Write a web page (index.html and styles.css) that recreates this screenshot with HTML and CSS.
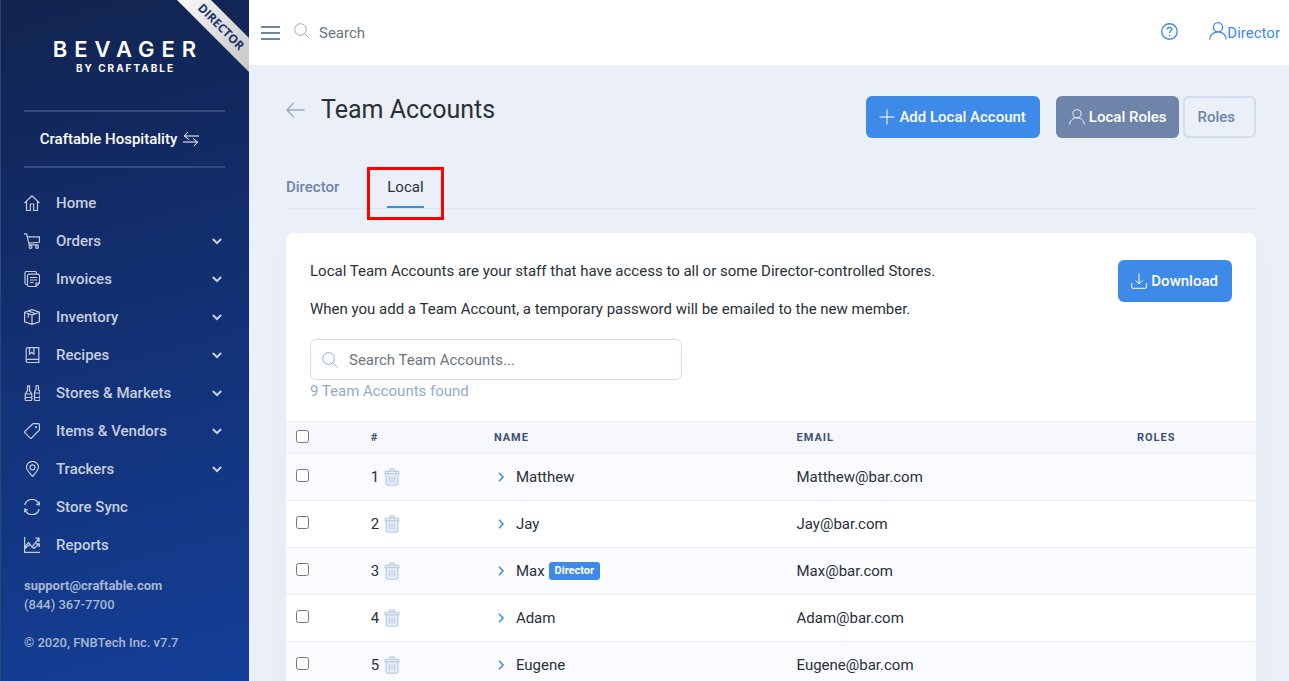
FILE: index.html
```html
<!DOCTYPE html>
<html lang="en">
<head>
<meta charset="utf-8">
<title>Team Accounts</title>
<link rel="stylesheet" href="styles.css">
</head>
<body>
<svg class="sprite" aria-hidden="true">
  <symbol id="chevron" viewBox="0 0 12 12"><path d="M1.800 4 6 8l4.200-4"/></symbol>
  <symbol id="search" viewBox="0 0 16 16"><circle cx="6.500" cy="6.500" r="5.800"/><path d="m10.700 10.700 4.800 4.800"/></symbol>
  <symbol id="user" viewBox="0 0 18 18"><circle cx="9" cy="5.300" r="4.600"/><path d="M.8 17.500c0-4.400 3.600-7.600 8.200-7.600s8.200 3.200 8.200 7.600"/></symbol>
  <symbol id="trash" viewBox="0 0 16 18"><path class="lid" d="M5.500 3V1.700C5.500 1 6 .8 6.500.8h3c.5 0 1 .2 1 .9V3M1.300 3.200h13.400l.5 2.600H.8z"/><path class="bin" d="M2 5.800h12v10.100c0 .9-.5 1.300-1.300 1.300H3.300c-.8 0-1.300-.4-1.300-1.300z"/><path d="M5.300 8.300v6.200M8 8.300v6.200m2.700-6.200v6.200"/></symbol>
</svg>
<div class="app">
  <aside class="sidebar">
    <div class="ribbon">DIRECTOR</div>
    <div class="brand"><span class="brand-name">BEVAGER</span><span class="brand-by">BY CRAFTABLE</span></div>
    <button class="company" type="button">Craftable Hospitality
      <svg class="icon" viewBox="0 0 16 16"><path d="M16 5H1.500M5 1 1.200 5 6 8.500M0 11h14.500M10 7.500l4.700 3.500-3.700 4"/></svg>
    </button>
    <nav class="nav">
      <a href="#"><svg class="icon" viewBox="0 0 16 16"><path d="M.5 8 8 .8 15.500 8M2.500 6.500v9h3.800V9h3.400v6.500h3.800v-9"/></svg><span>Home</span></a>
      <a href="#"><svg class="icon" viewBox="0 0 16 16"><path d="M0 .8h2.600l2.600 11h9.300M3.300 3.800h12.100v5.500l-10.700.8"/><circle cx="6.500" cy="14" r="1.400"/><circle cx="13" cy="14" r="1.400"/></svg><span>Orders</span><svg class="chev"><use href="#chevron"/></svg></a>
      <a href="#"><svg class="icon" viewBox="0 0 16 16"><path d="M3.500 13.500h-1A1.500 1.500 0 0 1 1 12V2A1.500 1.500 0 0 1 2.500.5H11A1.500 1.500 0 0 1 12.500 2v1M5 3.200h9a1.500 1.500 0 0 1 1.500 1.500V12L12 15.500H5A1.500 1.500 0 0 1 3.500 14V4.700A1.500 1.500 0 0 1 5 3.200M12 15.500V12h3.500M6 6.500h7M6 9h7M6 11.500h3.500"/></svg><span>Invoices</span><svg class="chev"><use href="#chevron"/></svg></a>
      <a href="#"><svg class="icon" viewBox="0 0 16 16"><path d="M.6 3.200 8 .6l7.400 2.600v9.600L8 15.400.6 12.800zM.6 3.200 8 6l7.400-2.800M8 6v9.400M4 1.900l7.500 2.800M4.300 4.600v4"/></svg><span>Inventory</span><svg class="chev"><use href="#chevron"/></svg></a>
      <a href="#"><svg class="icon" viewBox="0 0 16 16"><path d="M15.500 15.500H3.700a1.500 1.500 0 0 1 0-3.200h11.100V.6H3.700A1.500 1.500 0 0 0 2.200 2v12M14.800 12.300v3.200M5.500.6v6.600l2.200-2 2.200 2V.6"/></svg><span>Recipes</span><svg class="chev"><use href="#chevron"/></svg></a>
      <a href="#"><svg class="icon" viewBox="0 0 16 16"><path d="M3 .8h3M3.500 1v4.500L1.200 9v5.500c0 .6.4 1 1 1h4.600c.6 0 1-.4 1-1V9L5.500 5.500V1M1.200 9h6.600M1.200 12.500h6.600M12.200.5h2M12 .5v4.200c-1 .9-1.500 1.500-1.500 2.700v7.100c0 .6.4 1 1 1H15c.6 0 1-.4 1-1V7.400c0-1.200-.5-1.800-1.600-2.700V.5M10.500 8H16M10.500 12.500H16"/></svg><span>Stores &amp; Markets</span><svg class="chev"><use href="#chevron"/></svg></a>
      <a href="#"><svg class="icon" viewBox="0 0 16 16"><path d="M9 .7h5.500c.5 0 .9.400.9.900V7L7.500 15.200c-.4.400-.9.400-1.300 0L.8 9.700c-.4-.4-.4-.9 0-1.300z"/><circle cx="12" cy="4.200" r=".5"/></svg><span>Items &amp; Vendors</span><svg class="chev"><use href="#chevron"/></svg></a>
      <a href="#"><svg class="icon" viewBox="0 0 16 16"><path d="M8.500 15.500C5 11.300 2.500 9 2.500 6.300a6 6 0 0 1 12 0c0 2.700-2.500 5-6 9.200z"/><circle cx="8.500" cy="6.300" r="2.500"/></svg><span>Trackers</span><svg class="chev"><use href="#chevron"/></svg></a>
      <a href="#"><svg class="icon" viewBox="0 0 16 16"><path d="M.8 6A7.400 7.400 0 0 1 15 5.500M15.800 2.500l-.7 3.500-3.200-1M15.200 10A7.400 7.400 0 0 1 1 10.500M.2 13.500l.7-3.500 3.200 1"/></svg><span>Store Sync</span></a>
      <a href="#"><svg class="icon" viewBox="0 0 16 16"><path d="M.6 0v15.400H16M.8 10l3.700-4.500L8 10l7-8.500M11.500 1.200H15V5M1 11.500 5.500 7.500 10 11.500 15 7M12 6.800h3.300V10"/></svg><span>Reports</span></a>
    </nav>
    <div class="contact"><a href="mailto:support@craftable.com">support@craftable.com</a><span>(844) 367-7700</span><span class="copyright">© 2020, FNBTech Inc. v7.7</span></div>
  </aside>
  <div class="main">
    <header class="topbar">
      <button class="menu" type="button" aria-label="Menu"><svg viewBox="0 0 19 14"><path d="M0 1h19M0 7h19M0 13h19"/></svg></button>
      <svg class="icon pale lens"><use href="#search"/></svg>
      <input class="top-search" type="text" placeholder="Search" aria-label="Search">
      <a class="help" href="#" aria-label="Help"><svg viewBox="0 0 16 16"><circle cx="8" cy="8" r="7.300"/><path d="M5.800 6.200c0-1.300 1-2 2.200-2s2.200.7 2.200 1.900C10.200 7.600 8 7.600 8 9.300M8 11v1.200"/></svg></a>
      <a class="account" href="#"><svg><use href="#user"/></svg><span>Director</span></a>
    </header>
    <main class="content">
      <div class="heading">
        <a class="back" href="#" aria-label="Back"><svg viewBox="0 0 19 16"><path d="M18.500 8H1M8 .8.8 8 8 15.200"/></svg></a>
        <h1>Team Accounts</h1>
        <button class="btn primary add" type="button"><svg class="icon" viewBox="0 0 16 16"><path d="M8 .5v15M.5 8h15"/></svg>Add Local Account</button>
        <button class="btn slate" type="button"><svg class="icon" viewBox="0 0 18 18"><use href="#user" width="18" height="18"/></svg>Local Roles</button>
        <button class="btn outline" type="button">Roles</button>
      </div>
      <nav class="tabs"><a href="#">Director</a><a class="active" href="#">Local<span class="marker"></span></a></nav>
      <section class="card">
        <div class="intro">
          <div class="intro-text">
            <p>Local Team Accounts are your staff that have access to all or some Director-controlled Stores.</p>
            <p>When you add a Team Account, a temporary password will be emailed to the new member.</p>
            <label class="finder"><svg class="icon pale"><use href="#search"/></svg><input type="text" placeholder="Search Team Accounts..." aria-label="Search Team Accounts"></label>
            <div class="count">9 Team Accounts found</div>
          </div>
          <button class="btn primary" type="button"><svg class="icon" viewBox="0 0 16 16"><path d="M8 .5v10.300M4.500 7.500 8 11l3.500-3.500M.6 10v4c0 .8.5 1.300 1.300 1.300h12.200c.8 0 1.300-.5 1.300-1.300v-4"/></svg>Download</button>
        </div>
        <table>
          <colgroup><col class="c-check"><col class="c-num"><col class="c-name"><col class="c-email"><col></colgroup>
          <thead><tr><th><input type="checkbox" aria-label="Select all"></th><th>#</th><th>NAME</th><th>EMAIL</th><th>ROLES</th></tr></thead>
          <tbody>
            <tr><td><input type="checkbox" aria-label="Select Matthew"></td><td><div class="cell num">1<svg><use href="#trash"/></svg></div></td><td><div class="cell"><svg class="open"><use href="#chevron"/></svg><span>Matthew</span></div></td><td>Matthew@bar.com</td><td></td></tr>
            <tr><td><input type="checkbox" aria-label="Select Jay"></td><td><div class="cell num">2<svg><use href="#trash"/></svg></div></td><td><div class="cell"><svg class="open"><use href="#chevron"/></svg><span>Jay</span></div></td><td>Jay@bar.com</td><td></td></tr>
            <tr><td><input type="checkbox" aria-label="Select Max"></td><td><div class="cell num">3<svg><use href="#trash"/></svg></div></td><td><div class="cell"><svg class="open"><use href="#chevron"/></svg><span>Max</span><span class="badge">Director</span></div></td><td>Max@bar.com</td><td></td></tr>
            <tr><td><input type="checkbox" aria-label="Select Adam"></td><td><div class="cell num">4<svg><use href="#trash"/></svg></div></td><td><div class="cell"><svg class="open"><use href="#chevron"/></svg><span>Adam</span></div></td><td>Adam@bar.com</td><td></td></tr>
            <tr><td><input type="checkbox" aria-label="Select Eugene"></td><td><div class="cell num">5<svg><use href="#trash"/></svg></div></td><td><div class="cell"><svg class="open"><use href="#chevron"/></svg><span>Eugene</span></div></td><td>Eugene@bar.com</td><td></td></tr>
          </tbody>
        </table>
      </section>
    </main>
  </div>
</div>
</body>
</html>
```
FILE: styles.css
```css
* { box-sizing: border-box; }
body { margin: 0; font: 15px/22px Roboto, "Liberation Sans", sans-serif; color: #283038; background: #ebeff8; }
a { color: inherit; text-decoration: none; }
button, input { font: inherit; color: inherit; }
button { border: 0; background: none; padding: 0; }
svg { fill: none; stroke: currentColor; stroke-width: 1; flex: none; }
.sprite { position: absolute; width: 0; height: 0; }
.icon { width: 16px; height: 16px; }
.pale { color: #95aac9; }
.app { display: flex; height: 100vh; overflow: hidden; }

.sidebar { position: relative; flex: none; width: 249px; overflow: hidden; padding: 38px 24px 0 23px; border-left: 1px solid #2c4678; background: linear-gradient(165deg, #12244f, #122b66 30%, #143f98); color: #c6cedf; }
.ribbon { position: absolute; top: 15px; right: -32px; width: 120px; height: 24px; transform: rotate(45deg); background: linear-gradient(90deg, #fff, #e4e4e4 40%, #c4c4c4); color: #1d356b; font: bold 12px/24px "Open Sans", sans-serif; text-align: center; }
.brand { display: flex; flex-direction: column; align-items: center; height: 72px; color: #fff; }
.brand-name { padding-left: 7px; font: 600 22px/22px Inter, sans-serif; letter-spacing: 7px; }
.brand-by { padding-left: 2px; font: 700 10px/16px Inter, sans-serif; letter-spacing: 2px; }
.company { display: flex; align-items: center; justify-content: center; gap: 6px; width: 100%; height: 58px; padding-right: 10px; border: solid #324a7b; border-width: 2px 0; color: #fff; font-weight: 500; }
.nav { padding-top: 16px; }
.nav a { display: flex; align-items: center; gap: 16px; height: 38px; font-weight: 500; }
.nav .icon { stroke-width: 1.2; }
.chev { width: 12px; height: 12px; margin-left: auto; margin-right: 2px; stroke-width: 2; }
.contact { display: flex; flex-direction: column; padding-top: 12px; font-size: 13px; line-height: 19px; font-weight: 500; color: #a9b6d2; }
.contact a { font-weight: 700; }
.copyright { margin-top: 19px; }

.main { flex: 1; min-width: 0; }
.topbar { display: flex; align-items: center; height: 65px; padding: 0 9px 0 12px; background: #fff; }
.menu { display: flex; margin-right: 14px; color: #6e84a3; }
.menu svg { width: 19px; height: 14px; stroke-width: 2; }
.lens, .help svg, .account svg { margin-bottom: 3px; }
.top-search { flex: 1; min-width: 0; margin-left: 7px; border: 0; background: none; outline: 0; }
::placeholder { color: #6b7580; opacity: 1; }
.help, .account { display: flex; align-items: center; color: #3d8ae8; }
.help { margin-right: 31px; }
.help svg { width: 17px; height: 17px; stroke-width: 1.3; }
.account svg { width: 18px; height: 18px; stroke-width: 1.3; }

.content { padding: 31px 33px 0 37px; }
.heading { display: flex; align-items: flex-start; }
.back { display: flex; align-items: center; height: 28px; margin-right: 16px; color: #95aac9; }
.back svg { width: 19px; height: 16px; stroke-width: 1.3; }
h1 { margin: 0 auto 0 0; font-size: 25px; line-height: 27px; font-weight: 400; }
.btn { display: flex; align-items: center; justify-content: center; gap: 4px; height: 42px; padding: 0 14px 0 13px; border-radius: 6px; color: #fff; font-weight: 500; white-space: nowrap; }
.primary { background: #3d8ae8; }
.add { margin-right: 16px; }
.slate { margin-right: 4px; padding: 0 13px; background: #6e84a8; }
.outline { padding: 0 19px 0 12px; border: 2px solid #d2dcef; color: #6e84a8; }
.tabs { display: flex; gap: 48px; height: 56px; margin-top: 15px; margin-bottom: 24px; border-bottom: 1px solid #dee4ee; color: #6e84a8; font-weight: 500; }
.tabs a { position: relative; padding-top: 23px; height: 55px; }
.tabs .active { border-bottom: 2px solid #3d8ae8; color: #283038; font-weight: 400; }
.marker { position: absolute; inset: 14px -20px -14px; border: 3px solid #f00; }

.card { background: #fff; border-radius: 8px; overflow: hidden; box-shadow: 0 12px 24px rgba(18, 38, 63, 0.03); }
.intro { display: flex; justify-content: space-between; align-items: flex-start; padding: 27px 24px 19px; }
.intro-text { flex: 1; }
.intro p { margin: 0 0 16px; }
.finder { display: flex; align-items: center; gap: 11px; width: 46%; height: 41px; margin-top: 19px; padding: 0 11px; border: 1px solid #d2dcef; border-radius: 6px; }
.finder input { flex: 1; min-width: 0; border: 0; padding: 0; outline: 0; background: none; }
.count { color: #95aac9; }

table { width: 100%; border-collapse: collapse; table-layout: fixed; }
.c-check { width: 7.700%; }
.c-num { width: 12.700%; }
.c-name { width: 31.200%; }
.c-email { width: 35.100%; }
th, td { padding: 0 10px; text-align: left; border-top: 1px solid #e8eef7; }
th { height: 32px; background: #f6f8fd; color: #3c5078; font-size: 11px; line-height: 16px; letter-spacing: 1px; }
td { height: 47px; }
tbody tr:nth-child(odd) { background: #fafbfe; }
td input, th input { display: block; width: 13px; height: 13px; margin: 0 0 3px; }
.cell { display: flex; align-items: center; }
.num { gap: 5px; }
.num svg { width: 16px; height: 18px; color: #b5c6df; }
.lid, .bin { fill: #e6edf6; }
.open { width: 12px; height: 12px; margin-right: 9px; margin-left: 1px; color: #3d8ae8; stroke-width: 1.500; transform: rotate(-90deg); }
.badge { margin-left: 4px; padding: 0 6px; border-radius: 3px; background: #3d8ae8; color: #fff; font-size: 11px; line-height: 18px; font-weight: 700; }
```
